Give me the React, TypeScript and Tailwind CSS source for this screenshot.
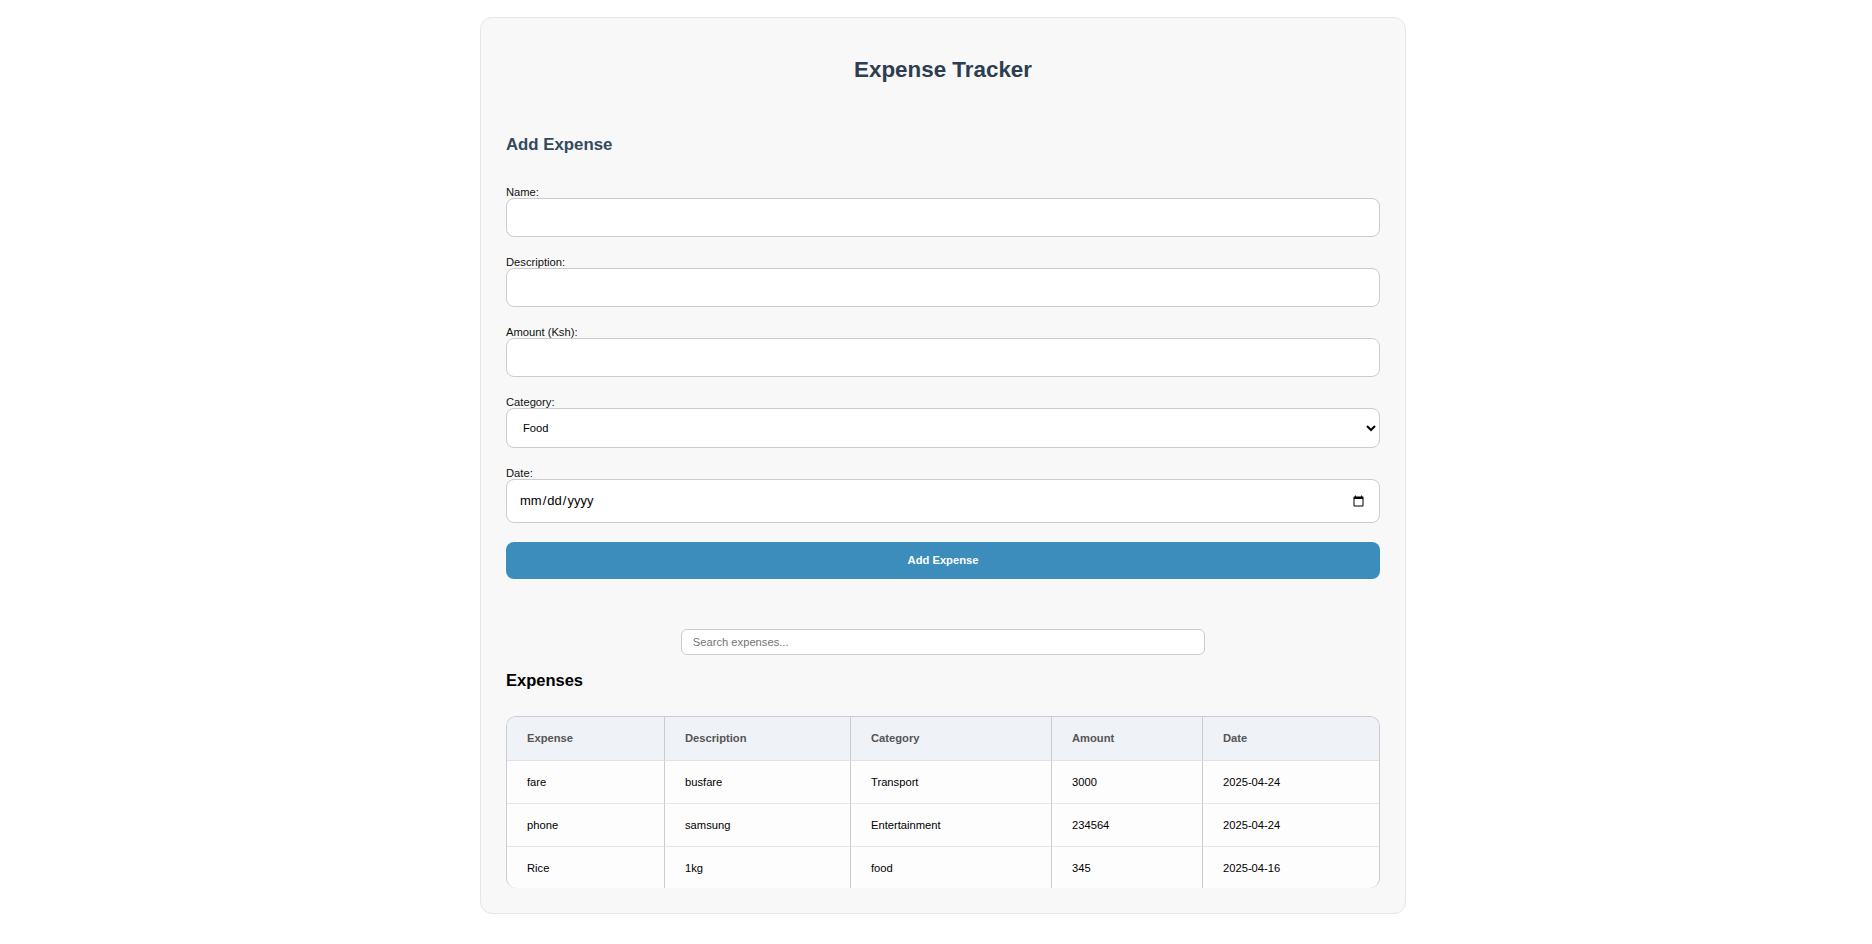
import React from 'react';

const expenses = [
  { name: 'fare', description: 'busfare', category: 'Transport', amount: 3000, date: '2025-04-24' },
  { name: 'phone', description: 'samsung', category: 'Entertainment', amount: 234564, date: '2025-04-24' },
  { name: 'Rice', description: '1kg', category: 'food', amount: 345, date: '2025-04-16' },
];

const Field = ({ label, children }: { label: string; children: React.ReactNode }) => (
  <div className="mb-[19px]">
    <label className="block text-[11.2px] leading-[12px] text-[#111]">{label}</label>
    {children}
  </div>
);

const inputClass =
  'block w-full h-[39px] rounded-[8px] border border-[#ccc] bg-white px-[12px] text-[11.2px] text-black outline-none';

const App = () => {
  return (
    <div className="min-h-screen bg-white pl-[14px] pt-[17px] font-['Liberation_Sans',Arial,sans-serif]">
      <div className="mx-auto w-[926px] rounded-[12px] border border-[#e6e6e6] bg-[#f8f8f8] p-[25px]">
        <h1 className="mt-[14px] text-center text-[22.4px] leading-[26px] font-bold text-[#2c3e50]">
          Expense Tracker
        </h1>

        {/* Add form */}
        <h3 className="mt-[52px] text-[16.8px] leading-[20px] font-bold text-[#34495e]">Add Expense</h3>
        <form className="mt-[31px]" onSubmit={(e) => e.preventDefault()}>
          <Field label="Name:">
            <input type="text" className={inputClass} />
          </Field>
          <Field label="Description:">
            <input type="text" className={inputClass} />
          </Field>
          <Field label="Amount (Ksh):">
            <input type="number" className={inputClass} />
          </Field>
          <Field label="Category:">
            <select className="block w-full h-[40px] rounded-[8px] border border-[#ccc] bg-white px-[12px] text-[11.2px] text-black outline-none" defaultValue="Food">
              <option>Food</option>
              <option>Transport</option>
              <option>Entertainment</option>
              <option>Other</option>
            </select>
          </Field>
          <Field label="Date:">
            <input type="date" className="block w-full h-[44px] rounded-[8px] border border-[#ccc] bg-white px-[12px] text-[13px] text-black outline-none" />
          </Field>
          <button
            type="submit"
            className="block w-full h-[37px] rounded-[8px] bg-[#3c8dbc] text-[11.2px] font-bold text-white"
          >
            Add Expense
          </button>
        </form>

        {/* Search */}
        <input
          type="text"
          placeholder="Search expenses..."
          className="mx-auto mt-[50px] block h-[26px] w-[60%] rounded-[6px] border border-[#ccc] bg-white px-[11px] text-[11.2px] outline-none placeholder:text-[#757575]"
        />

        <h2 className="mt-[15px] text-[16.5px] leading-[20px] font-bold text-black">Expenses</h2>

        {/* Expenses table */}
        <div className="mt-[26px] h-[172px] overflow-hidden rounded-[10px] border-x border-t border-[#ccc] bg-[#fdfdfd]">
          <table className="w-full table-fixed border-separate border-spacing-0 text-left text-[11.2px]">
            <colgroup>
              <col className="w-[158px]" />
              <col className="w-[186px]" />
              <col className="w-[201px]" />
              <col className="w-[151px]" />
              <col />
            </colgroup>
            <thead>
              <tr className="h-[44px] bg-[#eff2f7]">
                {['Expense', 'Description', 'Category', 'Amount', 'Date'].map((h, i) => (
                  <th
                    key={h}
                    className={`border-b border-[#e2e2e2] px-[20px] font-bold text-[#555] ${i < 4 ? 'border-r border-r-[#ccc]' : ''}`}
                  >
                    {h}
                  </th>
                ))}
              </tr>
            </thead>
            <tbody>
              {expenses.map((exp, index) => (
                <tr key={index} className="h-[43px]">
                  {[exp.name, exp.description, exp.category, exp.amount, exp.date].map((v, i) => (
                    <td
                      key={i}
                      className={`border-b border-[#e6e6e6] px-[20px] text-black ${i < 4 ? 'border-r border-r-[#ccc]' : ''}`}
                    >
                      {v}
                    </td>
                  ))}
                </tr>
              ))}
            </tbody>
          </table>
        </div>
      </div>
    </div>
  );
};

export default App;
